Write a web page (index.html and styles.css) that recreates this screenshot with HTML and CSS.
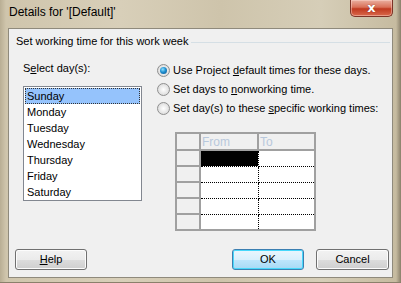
FILE: index.html
```html
<!DOCTYPE html>
<html>
<head>
<meta charset="utf-8">
<link rel="stylesheet" href="styles.css">
</head>
<body>
<div class="frame">
  <div class="titlebar">
    <span class="title">Details for '[Default]'</span>
    <div class="close"><span>x</span></div>
  </div>
  <div class="client">
    <div class="group-head"><span>Set working time for this work week</span><div class="rule"></div></div>
    <div class="main">
      <div class="left">
        <div class="label">S<u>e</u>lect day(s):</div>
        <div class="listbox">
          <div class="item sel">Sunday</div>
          <div class="item">Monday</div>
          <div class="item">Tuesday</div>
          <div class="item">Wednesday</div>
          <div class="item">Thursday</div>
          <div class="item">Friday</div>
          <div class="item">Saturday</div>
        </div>
      </div>
      <div class="right">
        <div class="radio-row"><span class="radio on"></span><span class="rtext">Use Project <u>d</u>efault times for these days.</span></div>
        <div class="radio-row"><span class="radio"></span><span class="rtext">Set days to <u>n</u>onworking time.</span></div>
        <div class="radio-row"><span class="radio"></span><span class="rtext">Set day(s) to these <u>s</u>pecific working times:</span></div>
        <table class="times">
          <tr class="hdr"><td class="rh"></td><td class="c1">From</td><td class="c2">To</td></tr>
          <tr><td class="rh"></td><td class="c1 cur"></td><td class="c2"></td></tr>
          <tr><td class="rh"></td><td class="c1"></td><td class="c2"></td></tr>
          <tr><td class="rh"></td><td class="c1"></td><td class="c2"></td></tr>
          <tr><td class="rh"></td><td class="c1"></td><td class="c2"></td></tr>
          <tr class="last"><td class="rh"></td><td class="c1"></td><td class="c2"></td></tr>
        </table>
      </div>
    </div>
    <div class="buttons">
      <div class="btn"><span><u>H</u>elp</span></div>
      <div class="spacer"></div>
      <div class="btn def">OK</div>
      <div class="btn">Cancel</div>
    </div>
  </div>
</div>
</body>
</html>
```
FILE: styles.css
```css
html, body { margin: 0; padding: 0; }
body { width: 401px; height: 283px; overflow: hidden; font-family: "Liberation Sans", Arial, sans-serif; }
.frame {
  box-sizing: border-box;
  width: 401px; height: 283px;
  padding: 0 8px 4px 8px;
  display: flex; flex-direction: column;
  background: linear-gradient(to right, #b9ae94 0px, #cfc5ac 6px, #d8cfb9 30%, #cec4ab 55%, #d6ceb8 80%, #c6bba0 396px, #8a806b 401px);
  border-bottom: 1px solid #8a806b;
}
.titlebar { height: 28px; display: flex; align-items: flex-start; position: relative; }
.title { font-size: 12px; color: #000; margin-top: 5px; margin-left: 1px; }
.close {
  position: absolute; right: 0; top: 0;
  width: 43px; height: 17px; box-sizing: border-box;
  border: 1px solid #7c3326; border-top: none;
  border-radius: 0 0 5px 5px;
  background: linear-gradient(#eab0a0 0%, #d97058 45%, #c0391f 55%, #d9694c 100%);
  display: flex; align-items: center; justify-content: center;
  box-shadow: inset 0 0 0 1px rgba(255,220,210,0.45);
}
.close span { color: #fff; font-weight: bold; font-size: 13px; line-height: 13px; margin-top: -2px; font-family: "DejaVu Sans", sans-serif; text-shadow: 0 0 1px #6a1a10; }
.client {
  flex: 1;
  background: #f0f0f0;
  border: 1px solid #8f8a7c;
  display: flex; flex-direction: column;
  font-size: 11px; color: #000;
}
.group-head { display: flex; align-items: center; margin-top: 6px; padding-left: 7px; height: 13px; line-height: 13px; }
.rule { flex: 1; height: 0; border-top: 1px solid #d5dfe5; margin-left: 3px; margin-right: 2px; margin-top: 1px; }
.main { display: flex; margin-top: 13px; }
.left { margin-left: 14px; width: 119px; }
.label { height: 13px; line-height: 13px; margin-top: 1px; }
.listbox {
  margin-top: 11px; box-sizing: border-box; width: 119px; height: 115px;
  background: #fff; border: 1px solid #828790; padding: 1px;
}
.item { height: 16px; line-height: 16px; padding-left: 2px; }
.item.sel { background: #95c3fc; outline: 1px dotted #333; outline-offset: -1px; }
.right { margin-left: 15px; display: flex; flex-direction: column; align-items: flex-start; }
.radio-row { height: 19px; display: flex; align-items: center; line-height: 13px; }
.rtext { white-space: pre; }
.radio {
  width: 13px; height: 13px; box-sizing: border-box; border-radius: 50%;
  border: 1px solid #8f8f8f; margin-right: 3px; margin-left: 0;
  background: radial-gradient(circle at 50% 50%, #ffffff 0%, #e4e4e4 60%, #cfcfcf 100%);
  position: relative; flex: none;
}
.radio.on::after {
  content: ""; position: absolute; left: 2px; top: 2px; width: 7px; height: 7px; border-radius: 50%;
  background: radial-gradient(circle at 40% 35%, #8ee0ff 0%, #1f8fd0 45%, #0b4f8a 100%);
}
.times {
  margin-top: 14px; margin-left: 18px;
  border-collapse: collapse;
  border: 2px solid #a0a0a0;
  background: #fff;
  table-layout: fixed;
  width: 139px;
}
.times td { padding: 0; height: 16px; box-sizing: border-box; }
.times .rh { width: 24px; background: #f0f0f0; border-right: 2px solid #a0a0a0; border-bottom: 2px solid #a0a0a0; }
.times .c1 { width: 58px; border-right: 1px dotted #000; border-bottom: 1px dotted #000; }
.times .c2 { width: 57px; border-bottom: 1px dotted #000; }
.times tr.last td { border-bottom: none; }
.times tr.hdr td { background: #f0f0f0; height: 17px; color: #b8c8dc; font-size: 12px; line-height: 14px; border-bottom: 2px solid #a0a0a0; border-right: 2px solid #a0a0a0; padding-left: 1px; }
.times tr.hdr td.c2 { border-right: none; }
.times td.cur { background: #000; }
.buttons { margin-top: auto; display: flex; padding: 0 3px 7px 6px; }
.spacer { flex: 1; }
.btn {
  width: 72px; height: 21px; box-sizing: border-box;
  border: 1px solid #707070; border-radius: 3px;
  background: linear-gradient(#f2f2f2 0%, #ebebeb 50%, #dddddd 51%, #cfcfcf 100%);
  box-shadow: inset 0 0 0 1px #fcfcfc;
  display: flex; align-items: center; justify-content: center;
  line-height: 13px;
}
.btn.def {
  border-color: #3c7fb1;
  background: linear-gradient(#eaf6fd 0%, #d9f0fc 50%, #bee6fd 51%, #a7d9f5 100%);
  box-shadow: inset 0 0 0 1px #48d8fb;
  margin-right: 12px;
}
.btn:last-child { width: 73px; }
```
